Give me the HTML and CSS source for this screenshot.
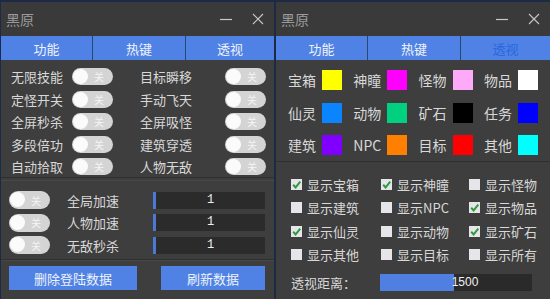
FILE: index.html
```html
<!DOCTYPE html>
<html lang="zh">
<head>
    <meta charset="UTF-8">
    <title>黑原</title>
    <link rel="stylesheet" href="styles.css">
</head>
<body>
    <div class="win">
        <div class="titlebar">
            <span class="title">黑原</span>
            <span class="ctrl"><svg width="12" height="12" viewBox="0 0 12 12"><path d="M0 6.5 H12" stroke="#c8c8c8" stroke-width="1.2"/></svg></span>
            <span class="ctrl"><svg width="12" height="12" viewBox="0 0 12 12"><path d="M1 1 L11 11 M11 1 L1 11" stroke="#c8c8c8" stroke-width="1.1"/></svg></span>
        </div>
        <div class="tabs">
            <div class="tab">功能</div>
            <div class="tab">热键</div>
            <div class="tab">透视</div>
        </div>

        <div class="panel switches">
            <div class="sw"><span>无限技能</span><span class="toggle"><i></i>关</span></div>
            <div class="sw"><span>目标瞬移</span><span class="toggle"><i></i>关</span></div>
            <div class="sw"><span>定怪开关</span><span class="toggle"><i></i>关</span></div>
            <div class="sw"><span>手动飞天</span><span class="toggle"><i></i>关</span></div>
            <div class="sw"><span>全屏秒杀</span><span class="toggle"><i></i>关</span></div>
            <div class="sw"><span>全屏吸怪</span><span class="toggle"><i></i>关</span></div>
            <div class="sw"><span>多段倍功</span><span class="toggle"><i></i>关</span></div>
            <div class="sw"><span>建筑穿透</span><span class="toggle"><i></i>关</span></div>
            <div class="sw"><span>自动拾取</span><span class="toggle"><i></i>关</span></div>
            <div class="sw"><span>人物无敌</span><span class="toggle"><i></i>关</span></div>
        </div>

        <div class="panel speeds">
            <div class="speed">
                <span class="toggle"><i></i>关</span>
                <span class="speed-name">全局加速</span>
                <span class="num">1</span>
            </div>
            <div class="speed">
                <span class="toggle"><i></i>关</span>
                <span class="speed-name">人物加速</span>
                <span class="num">1</span>
            </div>
            <div class="speed">
                <span class="toggle"><i></i>关</span>
                <span class="speed-name">无敌秒杀</span>
                <span class="num">1</span>
            </div>
        </div>

        <div class="actions">
            <button class="btn btn-del">删除登陆数据</button>
            <button class="btn btn-refresh">刷新数据</button>
        </div>
    </div>

    <div class="win">
        <div class="titlebar">
            <span class="title">黑原</span>
            <span class="ctrl"><svg width="12" height="12" viewBox="0 0 12 12"><path d="M0 6.5 H12" stroke="#c8c8c8" stroke-width="1.2"/></svg></span>
            <span class="ctrl"><svg width="12" height="12" viewBox="0 0 12 12"><path d="M1 1 L11 11 M11 1 L1 11" stroke="#c8c8c8" stroke-width="1.1"/></svg></span>
        </div>
        <div class="tabs">
            <div class="tab">功能</div>
            <div class="tab">热键</div>
            <div class="tab active">透视</div>
        </div>

        <div class="panel colors">
            <div class="clr"><span>宝箱</span><i style="background:#ffff00"></i></div>
            <div class="clr"><span>神瞳</span><i style="background:#ff00ff"></i></div>
            <div class="clr"><span>怪物</span><i style="background:#ffaaf8"></i></div>
            <div class="clr"><span>物品</span><i style="background:#ffffff"></i></div>
            <div class="clr"><span>仙灵</span><i style="background:#0a84ff"></i></div>
            <div class="clr"><span>动物</span><i style="background:#00d080"></i></div>
            <div class="clr"><span>矿石</span><i style="background:#000000"></i></div>
            <div class="clr"><span>任务</span><i style="background:#0000ff"></i></div>
            <div class="clr"><span>建筑</span><i style="background:#8000ff"></i></div>
            <div class="clr"><span>NPC</span><i style="background:#ff8000"></i></div>
            <div class="clr"><span>目标</span><i style="background:#ff0000"></i></div>
            <div class="clr"><span>其他</span><i style="background:#00ffff"></i></div>
        </div>

        <div class="panel checks">
            <label class="chk"><span class="box on"><svg viewBox="0 0 10 10"><path d="M2 5.2 L4.2 7.6 L8.4 2.4" stroke="#2f9a3c" stroke-width="1.8" fill="none"/></svg></span>显示宝箱</label>
            <label class="chk"><span class="box on"><svg viewBox="0 0 10 10"><path d="M2 5.2 L4.2 7.6 L8.4 2.4" stroke="#2f9a3c" stroke-width="1.8" fill="none"/></svg></span>显示神瞳</label>
            <label class="chk"><span class="box"></span>显示怪物</label>
            <label class="chk"><span class="box"></span>显示建筑</label>
            <label class="chk"><span class="box"></span>显示NPC</label>
            <label class="chk"><span class="box on"><svg viewBox="0 0 10 10"><path d="M2 5.2 L4.2 7.6 L8.4 2.4" stroke="#2f9a3c" stroke-width="1.8" fill="none"/></svg></span>显示物品</label>
            <label class="chk"><span class="box on"><svg viewBox="0 0 10 10"><path d="M2 5.2 L4.2 7.6 L8.4 2.4" stroke="#2f9a3c" stroke-width="1.8" fill="none"/></svg></span>显示仙灵</label>
            <label class="chk"><span class="box"></span>显示动物</label>
            <label class="chk"><span class="box on"><svg viewBox="0 0 10 10"><path d="M2 5.2 L4.2 7.6 L8.4 2.4" stroke="#2f9a3c" stroke-width="1.8" fill="none"/></svg></span>显示矿石</label>
            <label class="chk"><span class="box"></span>显示其他</label>
            <label class="chk"><span class="box"></span>显示目标</label>
            <label class="chk"><span class="box"></span>显示所有</label>
        </div>

        <div class="distance">
            <span class="dist-name">透视距离：</span>
            <div class="bar">
                <div class="fill" style="width:49%"></div>
                <span class="bar-val">1500</span>
            </div>
        </div>
    </div>
</body>
</html>
```

FILE: styles.css
```css
:root {
    --page: #1c2a45;
    --title-bg: #3a3a3a;
    --body-bg: #3e3e3e;
    --blue: #4f82e4;
    --text: #d8d8d8;
    --line: #2f2f2f;
}

body {
    margin: 0;
    padding: 2px 0 0 1px;
    background-color: var(--page);
    display: flex;
    gap: 2px;
    height: 297px;
    overflow: hidden;
    font-family: "Noto Sans CJK SC", "Noto Sans", sans-serif;
    font-size: 13px;
    color: var(--text);
}

.win {
    width: 273px;
    background-color: var(--body-bg);
    display: flex;
    flex-direction: column;
}

.win + .win {
    width: 274px;
}

.titlebar {
    height: 34px;
    background-color: var(--title-bg);
    display: flex;
    align-items: center;
    padding: 0 10px 0 5px;
}

.title {
    flex: 1;
    font-size: 14px;
    color: #9a9a9a;
    margin-top: -1px;
}

.ctrl {
    display: flex;
    width: 12px;
    margin-left: 20px;
}

.tabs {
    height: 24px;
    background-color: var(--blue);
    display: grid;
    grid-template-columns: 92px 93px 1fr;
}

.tab {
    display: flex;
    align-items: center;
    justify-content: center;
    color: #eef2fb;
    border-right: 1px solid #2c466f;
}

.tab:last-child {
    border-right: none;
}

.tab.active {
    color: #2767df;
}

.panel {
    border-bottom: 1px solid var(--line);
}

/* 功能 */
.switches {
    display: grid;
    grid-template-columns: 102px 126px;
    column-gap: 27px;
    row-gap: 5.5px;
    padding: 8px 0 4px 10px;
    height: 105px;
}

.sw {
    display: flex;
    align-items: center;
    justify-content: space-between;
    height: 17px;
}

.toggle {
    width: 41px;
    height: 17px;
    border-radius: 9px;
    background-color: #d4d4d4;
    display: flex;
    align-items: center;
    justify-content: flex-end;
    padding-right: 9px;
    box-sizing: border-box;
    font-size: 10px;
    color: #f4f4f4;
    position: relative;
}

.toggle i {
    position: absolute;
    left: 1px;
    top: 1px;
    width: 15px;
    height: 15px;
    border-radius: 50%;
    background-color: #fbfbfb;
}

.speeds {
    border-top: 1px solid #484848;
    margin-top: 2px;
    padding: 10px 0 5px 8px;
    display: flex;
    flex-direction: column;
    gap: 4.5px;
}

.speed {
    display: flex;
    align-items: center;
    height: 18px;
}

.speed .toggle {
    height: 18px;
}

.speed-name {
    margin-left: 17px;
    width: 86px;
}

.num {
    width: 112px;
    height: 17px;
    background-color: #2b2b2b;
    border-left: 3px solid #4d79d6;
    box-sizing: border-box;
    text-align: center;
    font-family: "Liberation Mono", monospace;
    font-size: 12px;
    line-height: 17px;
    color: #f0f0f0;
}

.actions {
    border-top: 1px solid #484848;
    display: flex;
    padding: 5px 0 0 8px;
}

.btn {
    height: 24px;
    border: none;
    background-color: var(--blue);
    color: #eef2fb;
    font-family: inherit;
    font-size: 13px;
    padding: 0;
}

.btn-del {
    width: 128px;
}

.btn-refresh {
    width: 104px;
    margin-left: 24px;
}

/* 透视 */
.colors {
    display: grid;
    grid-template-columns: repeat(4, 54px);
    column-gap: 11.3px;
    row-gap: 12.5px;
    padding: 10px 0 6px 12px;
}

.clr {
    display: flex;
    align-items: center;
    justify-content: space-between;
    height: 20px;
}

.clr span {
    font-size: 14px;
}

.clr i {
    width: 20px;
    height: 20px;
}

.checks {
    display: grid;
    grid-template-columns: 90px 88px 1fr;
    row-gap: 7.5px;
    padding: 14px 0 6px 15px;
    border-bottom: none;
}

.chk {
    display: flex;
    align-items: center;
    height: 16px;
    font-size: 13px;
}

.box {
    width: 11px;
    height: 11px;
    background-color: #e6e6ea;
    margin-right: 5px;
    display: flex;
}

.box svg {
    width: 11px;
    height: 11px;
}

.distance {
    display: flex;
    align-items: center;
    padding: 4px 0 0 15px;
}

.dist-name {
    width: 89px;
    font-size: 13px;
}

.bar {
    width: 152px;
    height: 17px;
    background-color: #2a2a2a;
    position: relative;
    display: flex;
    align-items: center;
    justify-content: center;
}

.fill {
    position: absolute;
    left: 0;
    top: 0;
    bottom: 0;
    background-color: #4f7fe0;
}

.bar-val {
    position: relative;
    padding-left: 18px;
    font-family: "Liberation Sans", sans-serif;
    font-size: 12px;
    color: #f0f0f0;
}
```
